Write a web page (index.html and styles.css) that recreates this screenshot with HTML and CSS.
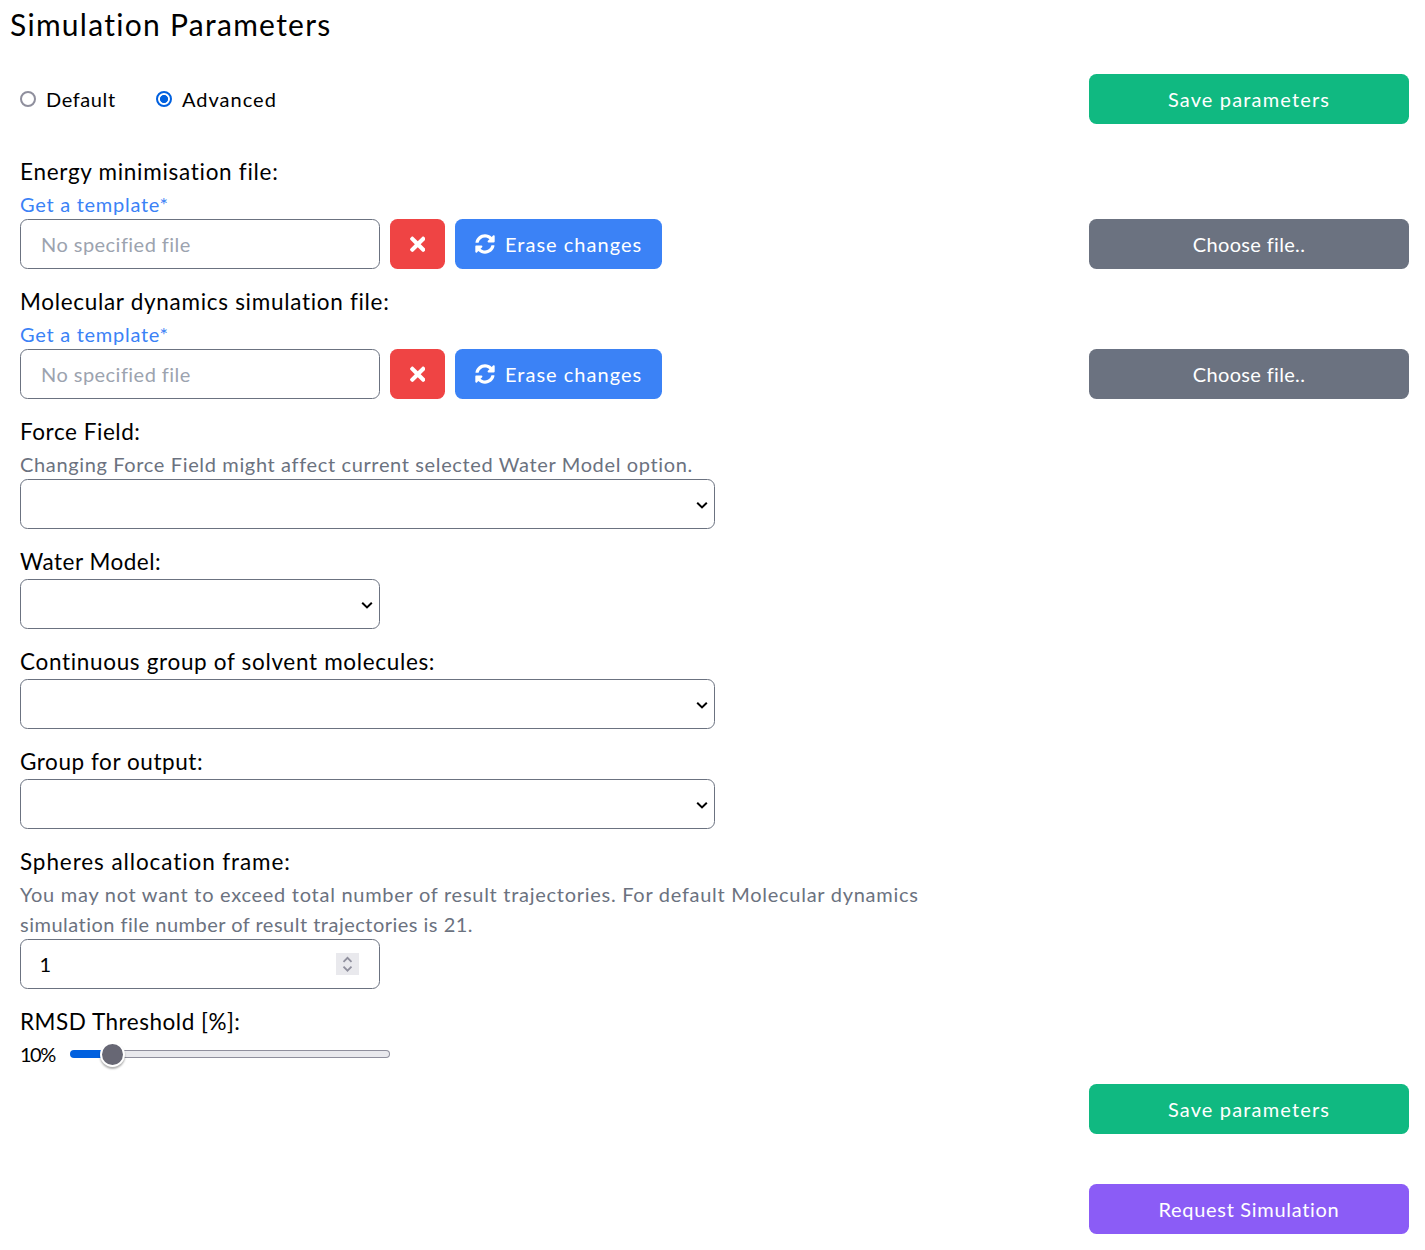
FILE: index.html
```html
<!DOCTYPE html>
<html lang="en">
<head>
<meta charset="utf-8">
<title>Simulation Parameters</title>
<link rel="stylesheet" href="styles.css">
</head>
<body>
<svg class="sprite" aria-hidden="true">
  <symbol id="times" viewBox="0 0 352 512"><path d="M242.72 256l100.07-100.07c12.28-12.28 12.28-32.19 0-44.48l-22.24-22.24c-12.28-12.28-32.19-12.28-44.48 0L176 189.28 75.93 89.21c-12.28-12.28-32.19-12.28-44.48 0L9.21 111.45c-12.28 12.28-12.28 32.19 0 44.48L109.28 256 9.21 356.07c-12.28 12.28-12.28 32.19 0 44.48l22.24 22.24c12.28 12.28 32.2 12.28 44.48 0L176 322.72l100.07 100.07c12.28 12.28 32.2 12.28 44.48 0l22.24-22.24c12.28-12.28 12.28-32.19 0-44.48L242.72 256z"/></symbol>
  <symbol id="sync" viewBox="0 0 512 512"><path d="M370.72 133.28C339.458 104.008 298.888 87.962 255.848 88c-77.458.068-144.328 53.178-162.791 126.85-1.344 5.363-6.122 9.15-11.651 9.15H24.103c-7.498 0-13.194-6.807-11.807-14.176C33.933 94.924 134.813 8 256 8c66.448 0 126.791 26.136 171.315 68.685L463.03 40.97C478.149 25.851 504 36.559 504 57.941V192c0 13.255-10.745 24-24 24H345.941c-21.382 0-32.09-25.851-16.971-40.971l41.75-41.749zM32 296h134.059c21.382 0 32.09 25.851 16.971 40.971l-41.75 41.75c31.262 29.273 71.835 45.319 114.876 45.28 77.418-.07 144.315-53.144 162.787-126.849 1.344-5.363 6.122-9.15 11.651-9.15h57.304c7.498 0 13.194 6.807 11.807 14.176C478.067 417.076 377.187 504 256 504c-66.448 0-126.791-26.136-171.315-68.685L48.97 471.03C33.851 486.149 8 475.441 8 454.059V320c0-13.255 10.745-24 24-24z"/></symbol>
  <symbol id="chevron" viewBox="0 0 12 8"><path d="M1.2 1.7L6 6.4L10.8 1.7" fill="none" stroke="currentColor" stroke-width="2"/></symbol>
  <symbol id="spin" viewBox="0 0 23 22"><path d="M7.5 8.8L11.5 4.8L15.5 8.8M7.5 13.7L11.5 17.7L15.5 13.7" fill="none" stroke="currentColor" stroke-width="1.8"/></symbol>
</svg>
<main class="page">
  <h1 class="title">Simulation Parameters</h1>

  <div class="row top">
    <div class="modes">
      <label class="mode"><input class="radio" type="radio" name="mode"><span class="t-default">Default</span></label>
      <label class="mode"><input class="radio" type="radio" name="mode" checked><span class="t-advanced">Advanced</span></label>
    </div>
    <button class="btn wide green t-save">Save parameters</button>
  </div>

  <section class="field">
    <h2 class="label t-energy">Energy minimisation file:</h2>
    <a class="hint link t-template">Get a template*</a>
    <div class="row">
      <div class="controls">
        <input class="box short t-nofile" placeholder="No specified file">
        <button class="btn red" aria-label="Clear"><svg class="icon-times"><use href="#times"/></svg></button>
        <button class="btn blue t-erase"><svg class="icon-sync"><use href="#sync"/></svg>Erase changes</button>
      </div>
      <button class="btn wide gray t-choose">Choose file..</button>
    </div>
  </section>

  <section class="field">
    <h2 class="label t-molecular">Molecular dynamics simulation file:</h2>
    <a class="hint link t-template">Get a template*</a>
    <div class="row">
      <div class="controls">
        <input class="box short t-nofile" placeholder="No specified file">
        <button class="btn red" aria-label="Clear"><svg class="icon-times"><use href="#times"/></svg></button>
        <button class="btn blue t-erase"><svg class="icon-sync"><use href="#sync"/></svg>Erase changes</button>
      </div>
      <button class="btn wide gray t-choose">Choose file..</button>
    </div>
  </section>

  <section class="field">
    <h2 class="label t-force">Force Field:</h2>
    <p class="hint t-changing">Changing Force Field might affect current selected Water Model option.</p>
    <div class="box long select"><svg class="chevron"><use href="#chevron"/></svg></div>
  </section>

  <section class="field">
    <h2 class="label t-water">Water Model:</h2>
    <div class="box short select"><svg class="chevron"><use href="#chevron"/></svg></div>
  </section>

  <section class="field">
    <h2 class="label t-continuous">Continuous group of solvent molecules:</h2>
    <div class="box long select"><svg class="chevron"><use href="#chevron"/></svg></div>
  </section>

  <section class="field">
    <h2 class="label t-output">Group for output:</h2>
    <div class="box long select"><svg class="chevron"><use href="#chevron"/></svg></div>
  </section>

  <section class="field">
    <h2 class="label t-spheres">Spheres allocation frame:</h2>
    <p class="hint"><span class="t-exceed">You may not want to exceed total number of result trajectories. For default Molecular dynamics</span><br><span class="t-result">simulation file number of result trajectories is 21.</span></p>
    <div class="box short number"><input class="number-input" value="1"><svg class="spin"><use href="#spin"/></svg></div>
  </section>

  <section class="field">
    <h2 class="label t-rmsd">RMSD Threshold [%]:</h2>
    <div class="range-row"><span class="percent">10%</span><input class="range" type="range" min="0" max="100" value="10"></div>
  </section>

  <div class="actions">
    <button class="btn wide green t-save">Save parameters</button>
    <button class="btn wide violet t-request">Request Simulation</button>
  </div>
</main>
</body>
</html>
```
FILE: styles.css
```css
* { box-sizing: border-box; }
body { margin: 0; background: #fff; color: #000; font: 20px/30px Lato, "Open Sans", sans-serif; }
h1, h2, p { margin: 0; font-weight: 400; }
button, input { font: inherit; letter-spacing: inherit; color: inherit; margin: 0; }
.sprite { display: none; }
.page { padding: 4px 16px 16px 20px; }
.title { margin-left: -10px; font-size: 30px; line-height: 40px; letter-spacing: 1.28px; }

.row { display: flex; justify-content: space-between; align-items: center; }
.top { margin: 30px 0 15px; }
.controls { display: flex; gap: 10px; }
.modes { display: flex; gap: 40px; }
.mode { display: flex; align-items: center; gap: 10px; }
.mode:first-child { width: 96px; }
.radio { appearance: none; flex: none; width: 16px; height: 16px; border: 2px solid #8f8f9d; border-radius: 50%; background: #fff; }
.radio:checked { border-color: #0060df; background: radial-gradient(circle, #0060df 3.7px, #fff 4.4px); }

.field { padding-top: 15px; }
.label { font-size: 22.5px; line-height: 35px; }
.hint { display: block; color: #6b7280; line-height: 30px; }
.link { width: max-content; color: #3b82f6; }

.box { display: flex; align-items: center; height: 50px; border: 1px solid #6b7280; border-radius: 7.5px; background: #fff; padding: 0 20px; }
.box::placeholder { color: #9ca3af; opacity: 1; }
.short { width: 360px; }
.long { width: 695px; }
.select { justify-content: flex-end; padding: 1px 6px 0; }
.chevron { width: 12px; height: 8px; }
.number { justify-content: space-between; }
.number-input { border: 0; padding: 0; margin-left: -1.5px; width: 200px; outline: 0; background: none; }
.spin { width: 23px; height: 22px; background: #e9e9ed; color: #8f8f9d; }

.btn { display: flex; align-items: center; justify-content: center; gap: 10px; height: 50px; border: 0; border-radius: 7.5px; padding: 0; color: #fff; }
.wide { width: 320px; }
.green { background: #10b981; }
.gray { background: #6b7280; }
.violet { background: #8b5cf6; }
.red { width: 55px; background: #ef4444; }
.blue { width: 207px; justify-content: flex-start; padding-left: 20px; background: #3b82f6; }
.icon-times { width: 15.5px; height: 22.5px; fill: currentColor; }
.icon-sync { width: 20px; height: 20px; fill: currentColor; }

.range-row { display: flex; align-items: center; height: 30px; }
.percent { width: 50px; letter-spacing: -1.5px; }
.range {
  appearance: none; width: 320px; height: 8px; border: 1px solid transparent; border-radius: 4px;
  background:
    linear-gradient(90deg, #0060df 40px, transparent 40px) border-box,
    linear-gradient(#e9e9ed, #e9e9ed) padding-box,
    linear-gradient(#8f8f9d, #8f8f9d) border-box;
}
.range::-webkit-slider-thumb { appearance: none; width: 25px; height: 25px; border: 2px solid #fff; border-radius: 50%; background: #676774; box-shadow: 0 2px 2px rgba(0, 0, 0, .3); }
.actions { display: flex; flex-direction: column; align-items: flex-end; gap: 50px; margin-top: 15px; }

/* tracking for each text */
.t-default { letter-spacing: .6px; }
.t-advanced { letter-spacing: 1px; }
.t-save { letter-spacing: 1.15px; }
.t-energy { letter-spacing: .71px; }
.t-template { letter-spacing: .73px; }
.t-nofile { letter-spacing: .46px; }
.t-erase { letter-spacing: 1.02px; }
.t-choose { letter-spacing: .34px; }
.t-molecular { letter-spacing: .7px; }
.t-force { letter-spacing: .55px; }
.t-changing { letter-spacing: .64px; }
.t-water { letter-spacing: .5px; }
.t-continuous { letter-spacing: .67px; }
.t-output { letter-spacing: .56px; }
.t-spheres { letter-spacing: .91px; }
.t-exceed { letter-spacing: .722px; }
.t-result { letter-spacing: .49px; }
.t-rmsd { letter-spacing: .51px; }
.t-request { letter-spacing: .69px; }

.field:has(.hint) .label { margin-bottom: 0; }
```
